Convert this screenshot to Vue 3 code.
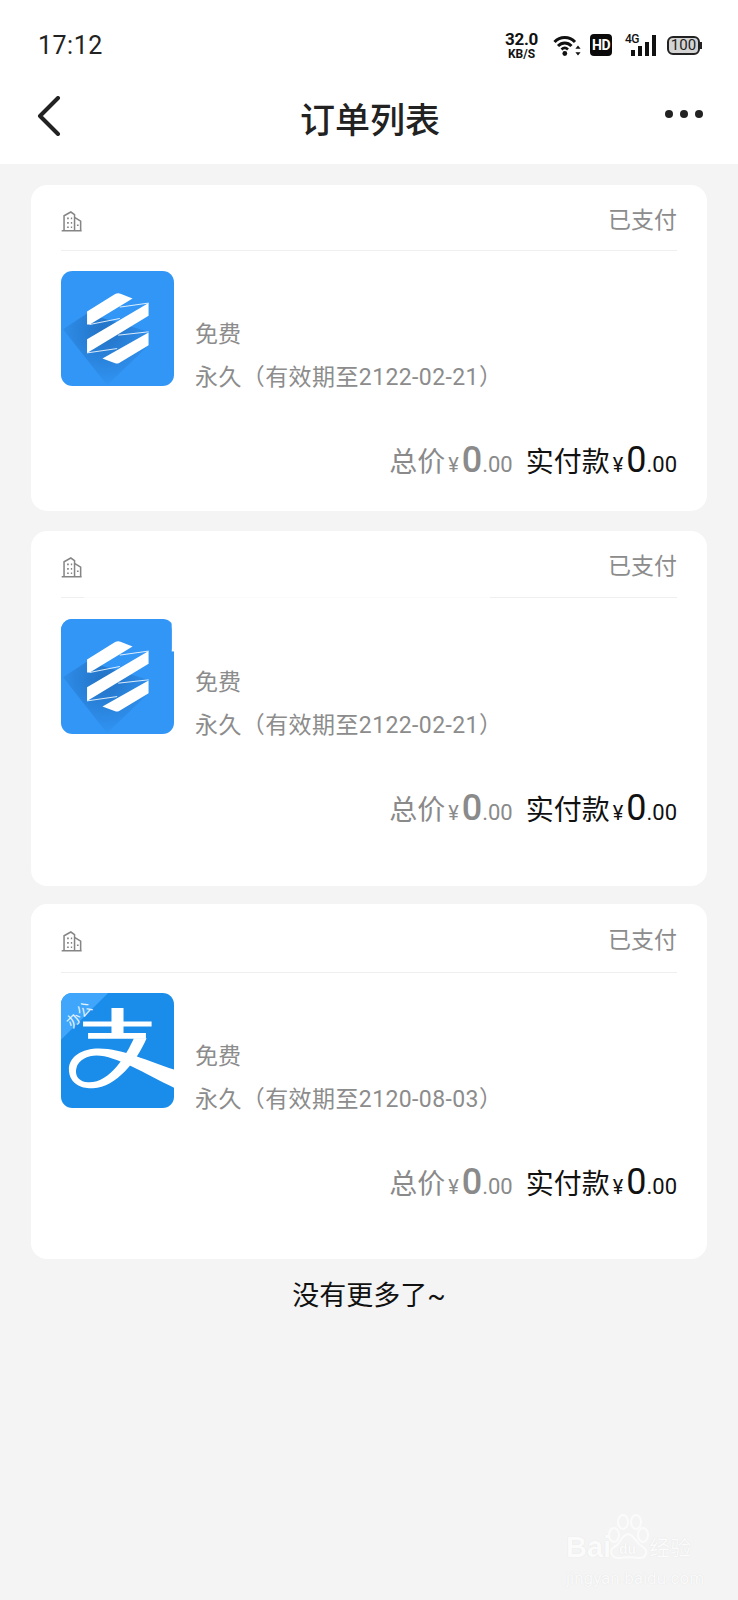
<script setup>
const orders = [
  { id: 1, kind: 'ribbon', expire: '2122-02-21', cls: 'card-short' },
  { id: 2, kind: 'ribbon', expire: '2122-02-21', cls: 'card-tall card-patched' },
  { id: 3, kind: 'alipay', expire: '2120-08-03', cls: 'card-tall card-last' }
];
</script>

<template>
  <div class="page">
    <header class="top">
      <div class="status">
        <span class="time">17:12</span>
        <div class="status-icons">
          <div class="speed">
            <span class="speed-num">32.0</span>
            <span class="speed-unit">KB/S</span>
          </div>
          <svg class="wifi" width="28" height="22" viewBox="0 0 28 22">
            <path d="M1.500 8C7 2 16.500 2 22 8" fill="none" stroke="#111" stroke-width="3" />
            <path d="M5 12C9 8 14.500 8 18.500 12" fill="none" stroke="#111" stroke-width="3" />
            <path d="M8.500 15.500C10.500 13.500 13 13.500 15 15.500" fill="none" stroke="#111" stroke-width="2.600" />
            <circle cx="11.800" cy="19.500" r="2.400" fill="#111" />
            <path d="M25 11.500l-2.600 3.200h5.200zM25 21.500l-2.600-3.200h5.200z" fill="#111" />
          </svg>
          <span class="hd">HD</span>
          <div class="signal">
            <span class="four-g">4G</span>
            <i class="b1"></i><i class="b2"></i><i class="b3"></i><i class="b4"></i>
          </div>
          <div class="battery"><span>100</span></div>
        </div>
      </div>
      <nav class="nav">
        <svg class="back" width="24" height="40" viewBox="0 0 24 40">
          <path d="M21 2L3 20l18 18" fill="none" stroke="#222" stroke-width="4" stroke-linecap="round" stroke-linejoin="round" />
        </svg>
        <h1>订单列表</h1>
        <div class="dots"><i></i><i></i><i></i></div>
      </nav>
    </header>

    <main class="list">
      <section v-for="o in orders" :key="o.id" class="card" :class="o.cls">
        <div class="card-head">
          <svg class="building" width="21" height="21" viewBox="95 78 62 62">
            <path d="M104 136V92L124 81L135 89V136M135 97L153 108V136M97 136H156" fill="none" stroke="#858585" stroke-width="4.500" />
            <path d="M113 100h5M113 113h5M113 126h5M124 100h4M124 113h4M124 126h4M142 120h5" stroke="#858585" stroke-width="5" />
          </svg>
          <span class="paid">已支付</span>
        </div>

        <div class="card-body">
          <svg v-if="o.kind === 'ribbon'" class="app" viewBox="94 258 338 344">
            <defs>
              <radialGradient :id="`shade${o.id}`" gradientUnits="userSpaceOnUse" cx="225" cy="440" r="170">
                <stop offset="0" stop-color="#2272c4" />
                <stop offset="1" stop-color="#3296f6" />
              </radialGradient>
            </defs>
            <rect x="94" y="258" width="338" height="344" rx="34" fill="#3296f6" />
            <template v-if="o.id === 2">
              <rect x="425" y="258" width="8" height="97" fill="#fff" />
              <rect x="94" y="258" width="331" height="120" rx="34" fill="#3296f6" />
            </template>
            <path d="M172 385L100 432L232 600L356 480V440Z" :fill="`url(#shade${o.id})`" />
            <path d="M172 379L256 327Q264 323 272 326L308 340L180 418H172Z" fill="#fff" />
            <path d="M356 354V392L172 503V462Z" fill="#fff" />
            <path d="M356 442V480L268 533Q262 536 256 534L218 520Z" fill="#fff" />
            <path d="M270 366L356 354M180 418L270 400M172 503L262 490M265 450L356 440" stroke="#fff" stroke-width="2.500" />
          </svg>
          <svg v-else class="app" viewBox="94 265 338 344">
            <defs>
              <clipPath id="alipayBox"><rect x="94" y="265" width="338" height="344" rx="34" /></clipPath>
            </defs>
            <g clip-path="url(#alipayBox)">
              <rect x="94" y="265" width="338" height="344" fill="#1a8dea" />
              <path d="M94 265H235L94 405Z" fill="#3fa6fb" />
              <path d="M245 310H281V350H365V365H281V385H348V402H175V385H245V365H160V350H245Z" fill="#fff" />
              <path d="M436 495C350 470 270 425 190 432C135 440 115 470 118 500C122 540 160 552 190 550C260 545 320 470 350 400H312C290 450 240 535 175 532C145 530 135 510 140 490C145 465 175 452 200 452C260 452 350 510 436 550Z" fill="#fff" />
            </g>
            <text x="0" y="0" transform="translate(128 372) rotate(-45)" class="corner">办公</text>
          </svg>
          <div class="info">
            <p>免费</p>
            <p class="validity">永久（有效期至{{ o.expire }}）</p>
          </div>
        </div>

        <div class="price-row">
          <div class="price grey">
            <span class="label">总价</span><span class="yen">¥</span><span class="big">0</span><span class="cents">.00</span>
          </div>
          <div class="price dark">
            <span class="label">实付款</span><span class="yen">¥</span><span class="big">0</span><span class="cents">.00</span>
          </div>
        </div>
      </section>
      <p class="no-more">没有更多了~</p>
    </main>

    <div class="watermark">
      <div class="wm-top">
        <span class="wm-bai">Bai</span>
        <svg width="42" height="50" viewBox="0 0 42 50">
          <g fill="none" stroke="#fbfbfb" stroke-width="2">
            <ellipse cx="7" cy="21" rx="5" ry="7" />
            <ellipse cx="16" cy="8" rx="5" ry="7" />
            <ellipse cx="29" cy="8" rx="5" ry="7" />
            <ellipse cx="36" cy="21" rx="5" ry="7" />
            <path d="M21 20C13 22 14 30 7 33C1 37 5 45 13 44C18 43 25 43 31 44C39 45 42 37 36 33C29 30 29 22 21 20Z" />
          </g>
          <text x="12" y="40" class="wm-du">du</text>
        </svg>
        <span class="wm-cn">经验</span>
      </div>
      <div class="wm-url">jingyan.baidu.com</div>
    </div>
  </div>
</template>

<style scoped>
.page {
  position: relative;
  width: 738px;
  height: 1600px;
  background: #f4f4f4;
  font-family: Roboto, "Noto Sans CJK SC", sans-serif;
  text-spacing-trim: space-all;
  overflow: hidden;
}

.top {
  height: 164px;
  background: #fff;
}

.status {
  height: 74px;
  padding: 16px 38px 0 38px;
  display: flex;
  align-items: center;
  justify-content: space-between;
  box-sizing: border-box;
}

.time {
  font-size: 25px;
  letter-spacing: 0.500px;
  color: #222;
}

.status-icons {
  display: flex;
  align-items: center;
}

.speed {
  display: flex;
  flex-direction: column;
  align-items: center;
  color: #111;
  font-weight: 700;
  line-height: 1;
}

.speed-num {
  font-size: 17px;
  letter-spacing: -0.300px;
}

.speed-unit {
  font-size: 12px;
}

.wifi {
  margin-left: 15px;
}

.hd {
  margin-left: 9px;
  width: 22px;
  height: 22px;
  border-radius: 4px;
  background: #0a0a0a;
  color: #fff;
  font-size: 14px;
  font-weight: 700;
  line-height: 22px;
  text-align: center;
  letter-spacing: -0.500px;
}

.signal {
  position: relative;
  margin-left: 13px;
  width: 31px;
  height: 22px;
  display: flex;
  align-items: flex-end;
  justify-content: flex-end;
  gap: 3px;
}

.signal i {
  display: block;
  width: 4px;
  background: #111;
}

.b1 { height: 6px; }
.b2 { height: 10px; }
.b3 { height: 14px; }
.b4 { height: 21px; }

.four-g {
  position: absolute;
  left: 0;
  top: -2px;
  font-size: 12px;
  font-weight: 500;
  letter-spacing: -0.500px;
  color: #111;
}

.battery {
  position: relative;
  margin-left: 11px;
  width: 29px;
  height: 15px;
  border: 2px solid #222;
  border-radius: 6px;
  background: #d4d4d4;
  color: #222;
  font-size: 15px;
  line-height: 15px;
  text-align: center;
}

.battery::after {
  content: "";
  position: absolute;
  right: -4px;
  top: 4px;
  width: 2px;
  height: 7px;
  background: #222;
}

.nav {
  height: 84px;
  padding: 0 35px 0 37px;
  display: grid;
  grid-template-columns: 1fr auto 1fr;
  align-items: center;
}

.nav h1 {
  margin: 2px 0 0;
  font-size: 35px;
  font-weight: 500;
  color: #222;
}

.dots {
  justify-self: end;
  margin-top: -5px;
  display: flex;
  gap: 7px;
}

.dots i {
  display: block;
  width: 8px;
  height: 8px;
  border-radius: 50%;
  background: #222;
}

.list {
  padding: 21px 31px 0;
}

.card {
  background: #fff;
  border-radius: 16px;
  padding: 0 30px;
  box-sizing: border-box;
  margin-bottom: 20px;
}

.card-short {
  height: 326px;
}

.card-tall {
  height: 355px;
}

.card-last {
  margin-bottom: 0;
  margin-top: -2px;
}

.card-last .card-head {
  height: 69px;
}

.card-head {
  height: 66px;
  display: flex;
  align-items: center;
  justify-content: space-between;
  border-bottom: 1px solid #efefef;
  box-sizing: border-box;
}

.building {
  margin-top: 7px;
}

.card-patched .card-head {
  height: 67px;
  border-image: linear-gradient(90deg, #efefef 24px, #fbfbfb 24px, #fbfbfb 429px, #efefef 429px) 1;
}

.card-patched .card-body {
  padding-top: 21px;
}

.paid {
  font-size: 23px;
  color: #8c8c8c;
}

.card-body {
  display: flex;
  align-items: flex-end;
  padding-top: 20px;
}

.app {
  flex: none;
  width: 113px;
  height: 115px;
}

.info {
  margin: 0 0 -13px 21px;
  color: #8c8c8c;
  font-size: 23px;
  line-height: 43px;
}

.info p {
  margin: 0;
}

.info .validity {
  letter-spacing: 0.400px;
}

.corner {
  font-size: 44px;
  fill: #e2f2ff;
  font-family: "Noto Sans CJK SC", sans-serif;
}

.price-row {
  margin-top: 54px;
  display: flex;
  justify-content: flex-end;
  align-items: baseline;
  gap: 13px;
  line-height: 40px;
}

.price {
  display: flex;
  align-items: baseline;
}

.grey {
  color: #8a8a8a;
}

.dark {
  color: #111;
}

.label {
  font-size: 28px;
}

.yen {
  margin: 0 3px;
  font-size: 20px;
}

.big {
  font-size: 36px;
}

.grey .big {
  font-weight: 500;
}

.cents {
  font-size: 22px;
}

.no-more {
  margin: 19px 0 0;
  text-align: center;
  font-size: 27px;
  line-height: 36px;
  color: #111;
}

.watermark {
  position: absolute;
  left: 566px;
  top: 1520px;
  width: 136px;
  color: #fbfbfb;
  text-shadow: 0 0 1px #dddddd;
}

.wm-top {
  display: flex;
  align-items: flex-end;
  height: 44px;
}

.wm-bai {
  font-size: 29px;
  font-weight: 700;
  line-height: 34px;
  font-family: "Liberation Sans", sans-serif;
}

.wm-top svg {
  margin-left: -4px;
  flex: none;
}

.wm-du {
  font-size: 14px;
  font-weight: 700;
  fill: #fbfbfb;
  font-family: "Liberation Sans", sans-serif;
}

.wm-cn {
  font-size: 21px;
  line-height: 32px;
}

.wm-url {
  margin-top: 4px;
  font-size: 17px;
  line-height: 20px;
  color: #fafafa;
}
</style>
